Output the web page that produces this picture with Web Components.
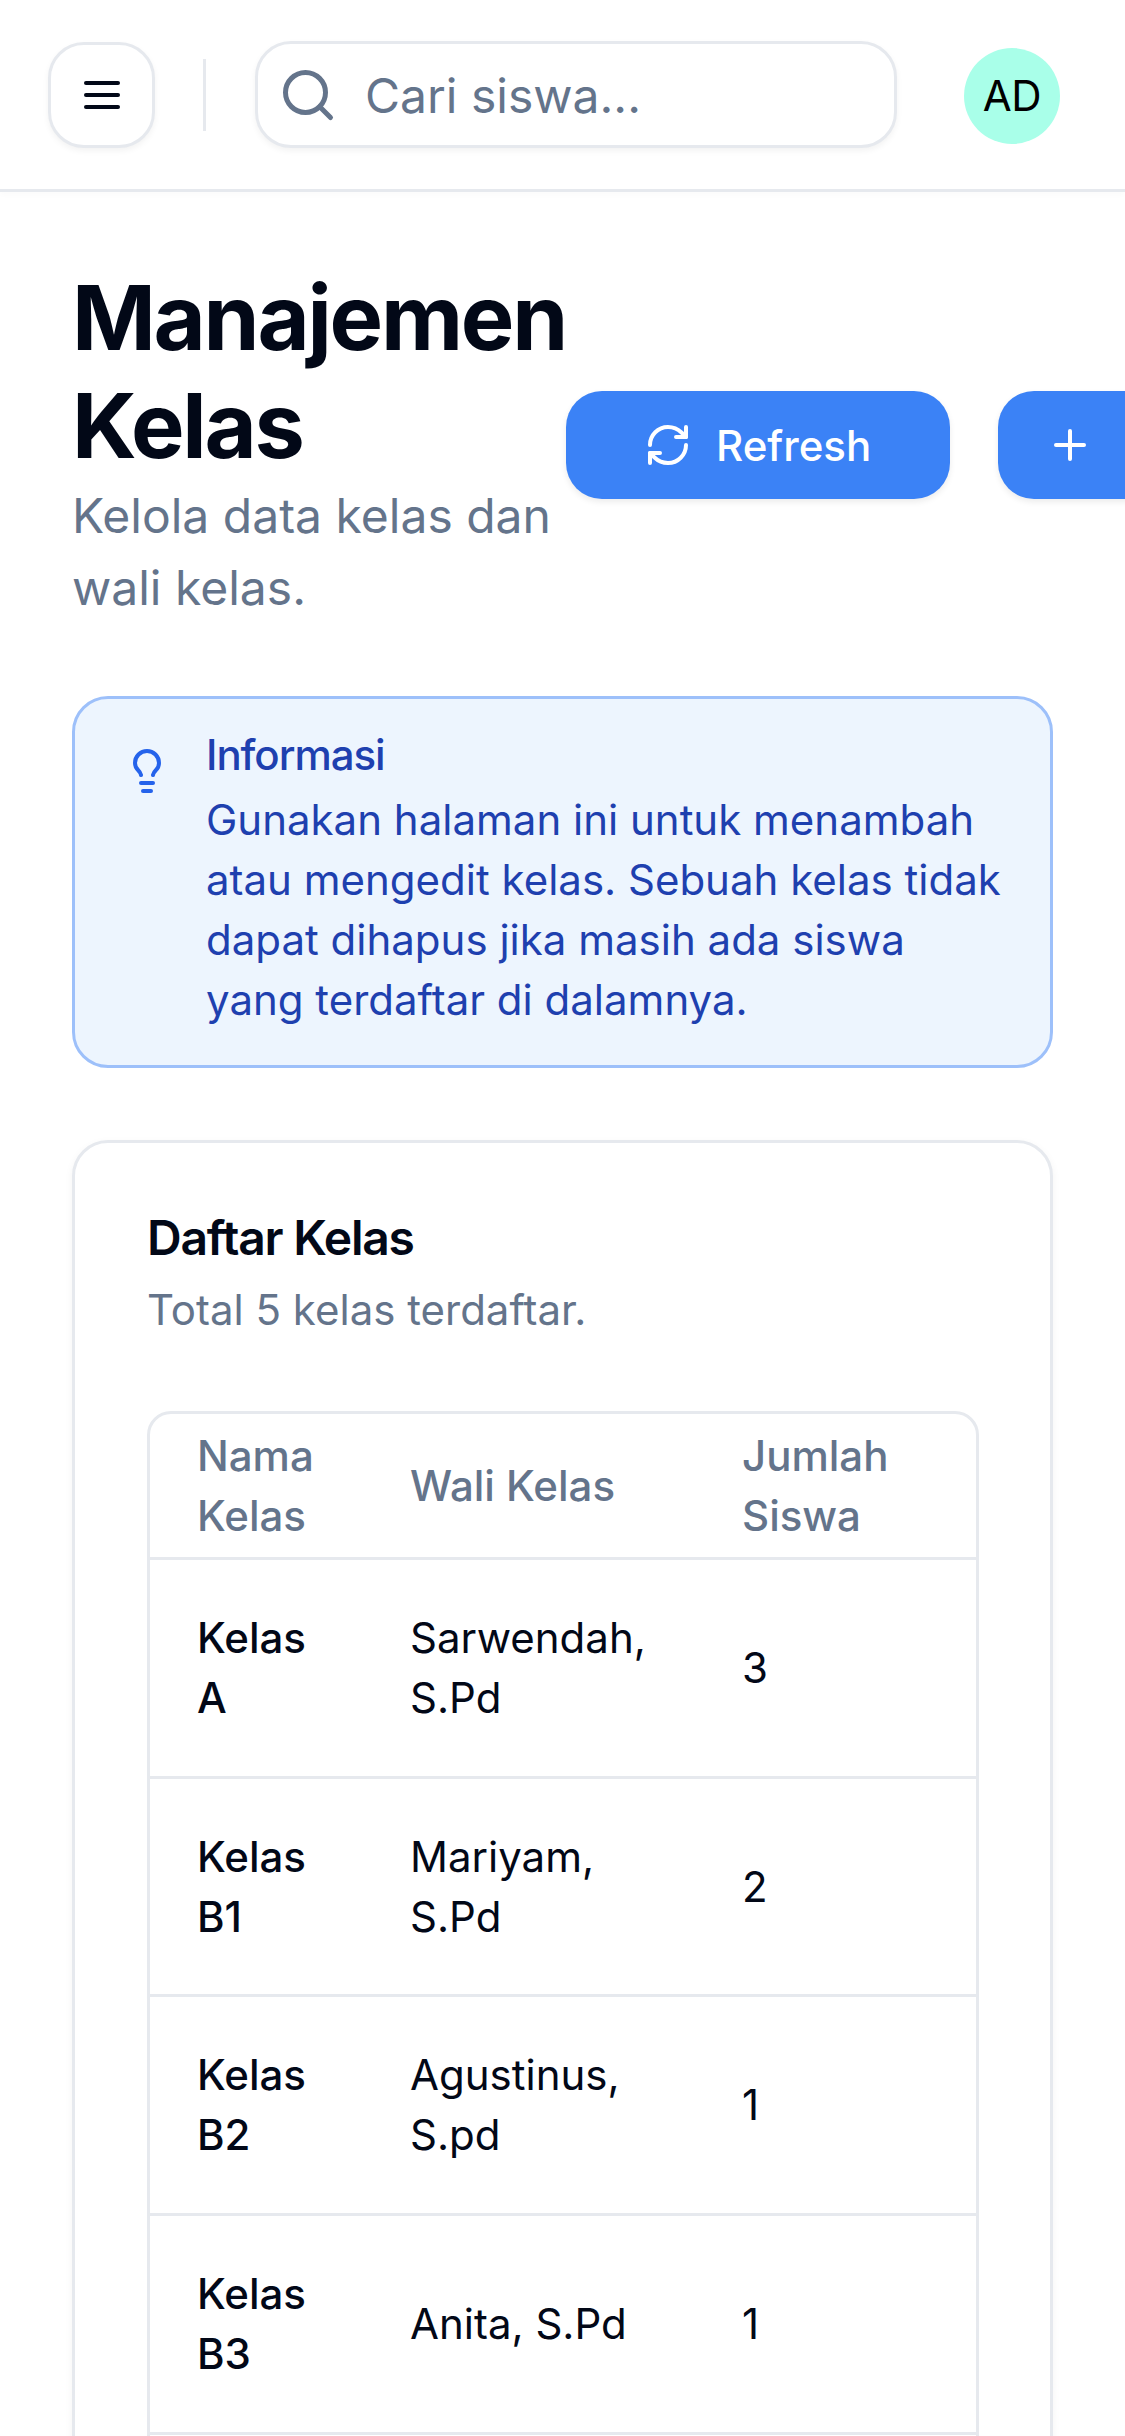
<!DOCTYPE html>
<html lang="id">
<head>
<meta charset="utf-8">
<title>Manajemen Kelas</title>
<style>
    html, body {
        margin: 0;
        height: 2436px;
        overflow: hidden;
        background: #ffffff;
        color: #020817;
        font-family: Inter, "Noto Sans", sans-serif;
    }
</style>
</head>
<body>
<app-shell>
    <app-topbar slot="top"></app-topbar>
    <page-heading title="Manajemen Kelas" subtitle="Kelola data kelas dan wali kelas.">
        <action-button icon="refresh" label="Refresh"></action-button>
        <action-button icon="plus" cut></action-button>
    </page-heading>
    <info-alert heading="Informasi">Gunakan halaman ini untuk menambah atau mengedit kelas. Sebuah kelas tidak dapat dihapus jika masih ada siswa yang terdaftar di dalamnya.</info-alert>
    <content-card heading="Daftar Kelas" description="Total 5 kelas terdaftar.">
        <class-table>
            <class-row head><span>Nama Kelas</span><span>Wali Kelas</span><span>Jumlah Siswa</span></class-row>
            <class-row><b>Kelas A</b><span>Sarwendah, S.Pd</span><span>3</span></class-row>
            <class-row><b>Kelas B1</b><span>Mariyam, S.Pd</span><span>2</span></class-row>
            <class-row><b>Kelas B2</b><span>Agustinus, S.pd</span><span>1</span></class-row>
            <class-row><b>Kelas B3</b><span>Anita, S.Pd</span><span>1</span></class-row>
        </class-table>
    </content-card>
</app-shell>

<script>
(() => {
    const line = "#e6e9ee"

    const icons = {
        menu: '<path d="M4 6h16"/><path d="M4 12h16"/><path d="M4 18h16"/>',
        search: '<circle cx="11" cy="11" r="8"/><path d="m21 21-4.3-4.3"/>',
        refresh: '<path d="M3 12a9 9 0 0 1 9-9 9.75 9.75 0 0 1 6.74 2.74L21 8"/><path d="M21 3v5h-5"/><path d="M21 12a9 9 0 0 1-9 9 9.75 9.75 0 0 1-6.74-2.74L3 16"/><path d="M8 16H3v5"/>',
        plus: '<path d="M5 12h14"/><path d="M12 5v14"/>',
        bulb: '<path d="M15 14c.2-1 .7-1.7 1.5-2.5 1-.9 1.5-2.2 1.5-3.5A6 6 0 0 0 6 8c0 1 .2 2.2 1.5 3.5.7.7 1.3 1.5 1.5 2.5"/><path d="M9 18h6"/><path d="M10 22h4"/>'
    }

    const icon = (name, size) => `<svg width="${size}" height="${size}" viewBox="0 0 24 24" fill="none" stroke="currentColor" stroke-width="2" stroke-linecap="round" stroke-linejoin="round">${icons[name]}</svg>`

    class AppShell extends HTMLElement {
        constructor() {
            super()
            this.attachShadow({ mode: "open" }).innerHTML = `
                <style>
                    :host { display: block; width: 1125px; height: 2436px; overflow: hidden; }
                    main { display: flex; flex-direction: column; gap: 72px; padding: 72px; }
                </style>
                <slot name="top"></slot>
                <main><slot></slot></main>
            `
        }
    }

    class AppTopbar extends HTMLElement {
        constructor() {
            super()
            this.attachShadow({ mode: "open" }).innerHTML = `
                <style>
                    :host {
                        display: flex;
                        align-items: center;
                        box-sizing: border-box;
                        height: 192px;
                        padding: 0 65px 0 48px;
                        background: #fff;
                        border-bottom: 3px solid ${line};
                        box-shadow: 0 3px 6px rgba(0, 0, 0, .02);
                    }
                    .menu {
                        flex: none;
                        display: grid;
                        place-items: center;
                        box-sizing: border-box;
                        width: 107px;
                        height: 106px;
                        border: 3px solid ${line};
                        border-radius: 36px;
                        background: #fff;
                        box-shadow: 0 3px 6px rgba(0, 0, 0, .05);
                    }
                    .sep { flex: none; width: 3px; height: 72px; margin: 0 49px 0 48px; background: ${line}; }
                    .search {
                        flex: 1;
                        display: flex;
                        align-items: center;
                        gap: 27px;
                        box-sizing: border-box;
                        height: 107px;
                        padding-left: 20px;
                        border: 3px solid ${line};
                        border-radius: 36px;
                        background: #fff;
                        box-shadow: 0 3px 6px rgba(0, 0, 0, .05);
                        color: #64748b;
                        font-size: 48px;
                    }
                    .search svg { flex: none; }
                    .search span { position: relative; top: 1px; }
                    .avatar {
                        flex: none;
                        display: grid;
                        place-items: center;
                        width: 96px;
                        height: 96px;
                        margin: 2px 0 0 67px;
                        border-radius: 50%;
                        background: #a9ffe9;
                        color: #000;
                        font-size: 42px;
                        letter-spacing: -.5px;
                    }
                </style>
                <div class="menu">${icon("menu", 48)}</div>
                <div class="sep"></div>
                <div class="search">${icon("search", 60)}<span>Cari siswa...</span></div>
                <div class="avatar">AD</div>
            `
        }
    }

    class PageHeading extends HTMLElement {
        constructor() {
            super()
            this.attachShadow({ mode: "open" }).innerHTML = `
                <style>
                    :host { display: flex; align-items: center; }
                    .text { flex: 0 0 494px; }
                    h1 { margin: 0; font-size: 90px; line-height: 108px; font-weight: 700; letter-spacing: -2.25px; color: #020817; }
                    p { margin: 0; font-size: 48px; line-height: 72px; color: #64748b; }
                    .actions { flex: none; display: flex; gap: 48px; margin-top: 2px; }
                </style>
                <div class="text">
                    <h1>${this.getAttribute("title")}</h1>
                    <p>${this.getAttribute("subtitle")}</p>
                </div>
                <div class="actions"><slot></slot></div>
            `
        }
    }

    class ActionButton extends HTMLElement {
        constructor() {
            super()
            const label = this.getAttribute("label")
            this.attachShadow({ mode: "open" }).innerHTML = `
                <style>
                    :host {
                        display: flex;
                        align-items: center;
                        gap: 24px;
                        box-sizing: border-box;
                        width: 384px;
                        height: 108px;
                        padding-left: 78px;
                        border-radius: 36px;
                        background: #3b82f6;
                        color: #fff;
                        font-size: 42px;
                        font-weight: 500;
                        box-shadow: 0 3px 6px rgba(0, 0, 0, .08);
                    }
                    :host([cut]) { width: 300px; padding-left: 48px; }
                    svg { flex: none; }
                </style>
                ${icon(this.getAttribute("icon"), 48)}
                ${label ? `<span>${label}</span>` : ""}
            `
        }
    }

    class InfoAlert extends HTMLElement {
        constructor() {
            super()
            this.attachShadow({ mode: "open" }).innerHTML = `
                <style>
                    :host {
                        display: flex;
                        gap: 35px;
                        padding: 35px 48px 35px;
                        border: 3px solid #9dc0fa;
                        border-radius: 36px;
                        background: #edf5fe;
                        color: #1e40af;
                        font-size: 42px;
                    }
                    svg { flex: none; margin-top: 13px; color: #2563eb; }
                    h5 { margin: 0 0 14px; font-size: 42px; line-height: 42px; font-weight: 500; letter-spacing: -1.05px; }
                    div { line-height: 60px; }
                </style>
                ${icon("bulb", 48)}
                <section>
                    <h5>${this.getAttribute("heading")}</h5>
                    <div><slot></slot></div>
                </section>
            `
        }
    }

    class ContentCard extends HTMLElement {
        constructor() {
            super()
            this.attachShadow({ mode: "open" }).innerHTML = `
                <style>
                    :host {
                        display: block;
                        padding: 71px 72px 72px;
                        border: 3px solid ${line};
                        border-radius: 36px;
                        background: #fff;
                        box-shadow: 0 3px 9px rgba(0, 0, 0, .05);
                    }
                    h3 { margin: 0 0 18px; font-size: 48px; line-height: 48px; font-weight: 600; letter-spacing: -1.25px; color: #020817; }
                    p { margin: 0 0 71px; font-size: 42px; line-height: 60px; color: #64748b; }
                </style>
                <h3>${this.getAttribute("heading")}</h3>
                <p>${this.getAttribute("description")}</p>
                <slot></slot>
            `
        }
    }

    class ClassTable extends HTMLElement {
        constructor() {
            super()
            this.attachShadow({ mode: "open" }).innerHTML = `
                <style>
                    :host {
                        display: block;
                        margin-right: -1px;
                        border: 3px solid ${line};
                        border-radius: 24px;
                        overflow: hidden;
                        height: 1400px;
                    }
                </style>
                <slot></slot>
            `
        }
    }

    class ClassRow extends HTMLElement {
        constructor() {
            super()
            this.attachShadow({ mode: "open" }).innerHTML = `
                <style>
                    :host {
                        display: grid;
                        grid-template-columns: 212px 332px 1fr;
                        align-items: center;
                        box-sizing: border-box;
                        height: 218.7px;
                        border-bottom: 3px solid ${line};
                        font-size: 42px;
                        line-height: 60px;
                        color: #020817;
                    }
                    :host([head]) { height: 146px; color: #64748b; font-weight: 500; }
                    ::slotted(*) { display: block; box-sizing: border-box; padding: 0 48px; font-weight: inherit; }
                    ::slotted(:first-child) { padding-left: 47px; }
                    ::slotted(b) { font-weight: 500; }
                </style>
                <slot></slot>
            `
        }
    }

    customElements.define("app-shell", AppShell)
    customElements.define("app-topbar", AppTopbar)
    customElements.define("page-heading", PageHeading)
    customElements.define("action-button", ActionButton)
    customElements.define("info-alert", InfoAlert)
    customElements.define("content-card", ContentCard)
    customElements.define("class-table", ClassTable)
    customElements.define("class-row", ClassRow)
})()
</script>
</body>
</html>
